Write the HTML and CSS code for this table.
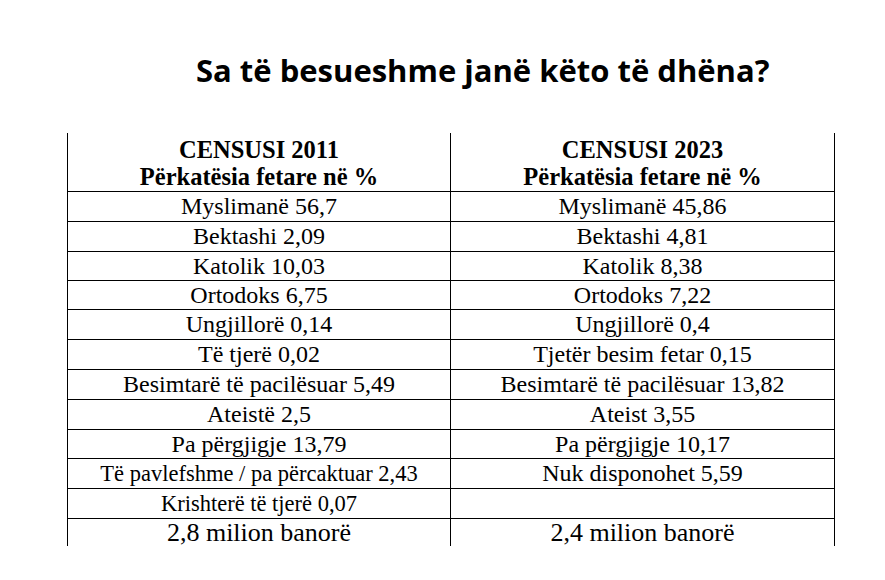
FILE: index.html
```html
<!DOCTYPE html>
<html lang="sq">
<head>
<meta charset="utf-8">
<title>Sa të besueshme janë këto të dhëna?</title>
<link rel="stylesheet" href="styles.css">
</head>
<body>
<h1 class="title">Sa të besueshme janë këto të dhëna?</h1>
<div class="census">
  <div class="row head">
    <div class="cell">CENSUSI 2011<br>Përkatësia fetare në %</div>
    <div class="cell">CENSUSI 2023<br>Përkatësia fetare në %</div>
  </div>
  <div class="row"><div class="cell">Myslimanë 56,7</div><div class="cell">Myslimanë 45,86</div></div>
  <div class="row"><div class="cell">Bektashi 2,09</div><div class="cell">Bektashi 4,81</div></div>
  <div class="row tight"><div class="cell">Katolik 10,03</div><div class="cell">Katolik 8,38</div></div>
  <div class="row tight"><div class="cell">Ortodoks 6,75</div><div class="cell">Ortodoks 7,22</div></div>
  <div class="row"><div class="cell">Ungjillorë 0,14</div><div class="cell">Ungjillorë 0,4</div></div>
  <div class="row"><div class="cell">Të tjerë 0,02</div><div class="cell">Tjetër besim fetar 0,15</div></div>
  <div class="row"><div class="cell">Besimtarë të pacilësuar 5,49</div><div class="cell">Besimtarë të pacilësuar 13,82</div></div>
  <div class="row"><div class="cell">Ateistë 2,5</div><div class="cell">Ateist 3,55</div></div>
  <div class="row tight"><div class="cell">Pa përgjigje 13,79</div><div class="cell">Pa përgjigje 10,17</div></div>
  <div class="row"><div class="cell small">Të pavlefshme / pa përcaktuar 2,43</div><div class="cell">Nuk disponohet 5,59</div></div>
  <div class="row"><div class="cell small">Krishterë të tjerë 0,07</div><div class="cell"></div></div>
  <div class="row total"><div class="cell">2,8 milion banorë</div><div class="cell">2,4 milion banorë</div></div>
</div>
</body>
</html>
```
FILE: styles.css
```css
html, body {
  margin: 0;
  padding: 0;
  background: #fff;
  color: #000;
}

body {
  width: 885px;
  height: 580px;
  overflow: hidden;
}

.title {
  margin: 0;
  padding: 52px 0 0 196px;
  height: 81px;
  box-sizing: border-box;
  font-family: "Open Sans", "Noto Sans", sans-serif;
  font-weight: 700;
  font-size: 31px;
  line-height: 36px;
  white-space: nowrap;
}

.census {
  margin: 52px 0 0 67px;
  width: 768px;
}

.row {
  display: grid;
  grid-template-columns: 383px 385px;
  height: 30px;
  box-sizing: border-box;
  border-top: 1px solid #000;
}

.cell {
  border-left: 1px solid #000;
  text-align: center;
  font-family: "Liberation Serif", "Times New Roman", serif;
  font-weight: 400;
  font-size: 24px;
  line-height: 29px;
  white-space: nowrap;
}

.cell:last-child {
  border-right: 1px solid #000;
}

.cell.small {
  font-size: 22.5px;
}

.row.tight {
  height: 29px;
}

.row.tight .cell {
  line-height: 28px;
}

.row.head {
  height: 58px;
  border-top: 0;
}

.row.head .cell {
  padding-top: 3px;
  font-weight: 700;
  font-size: 24.5px;
  line-height: 27px;
}

.row.total {
  height: 28px;
}

.row.total .cell {
  font-size: 26px;
  line-height: 27px;
}
```
